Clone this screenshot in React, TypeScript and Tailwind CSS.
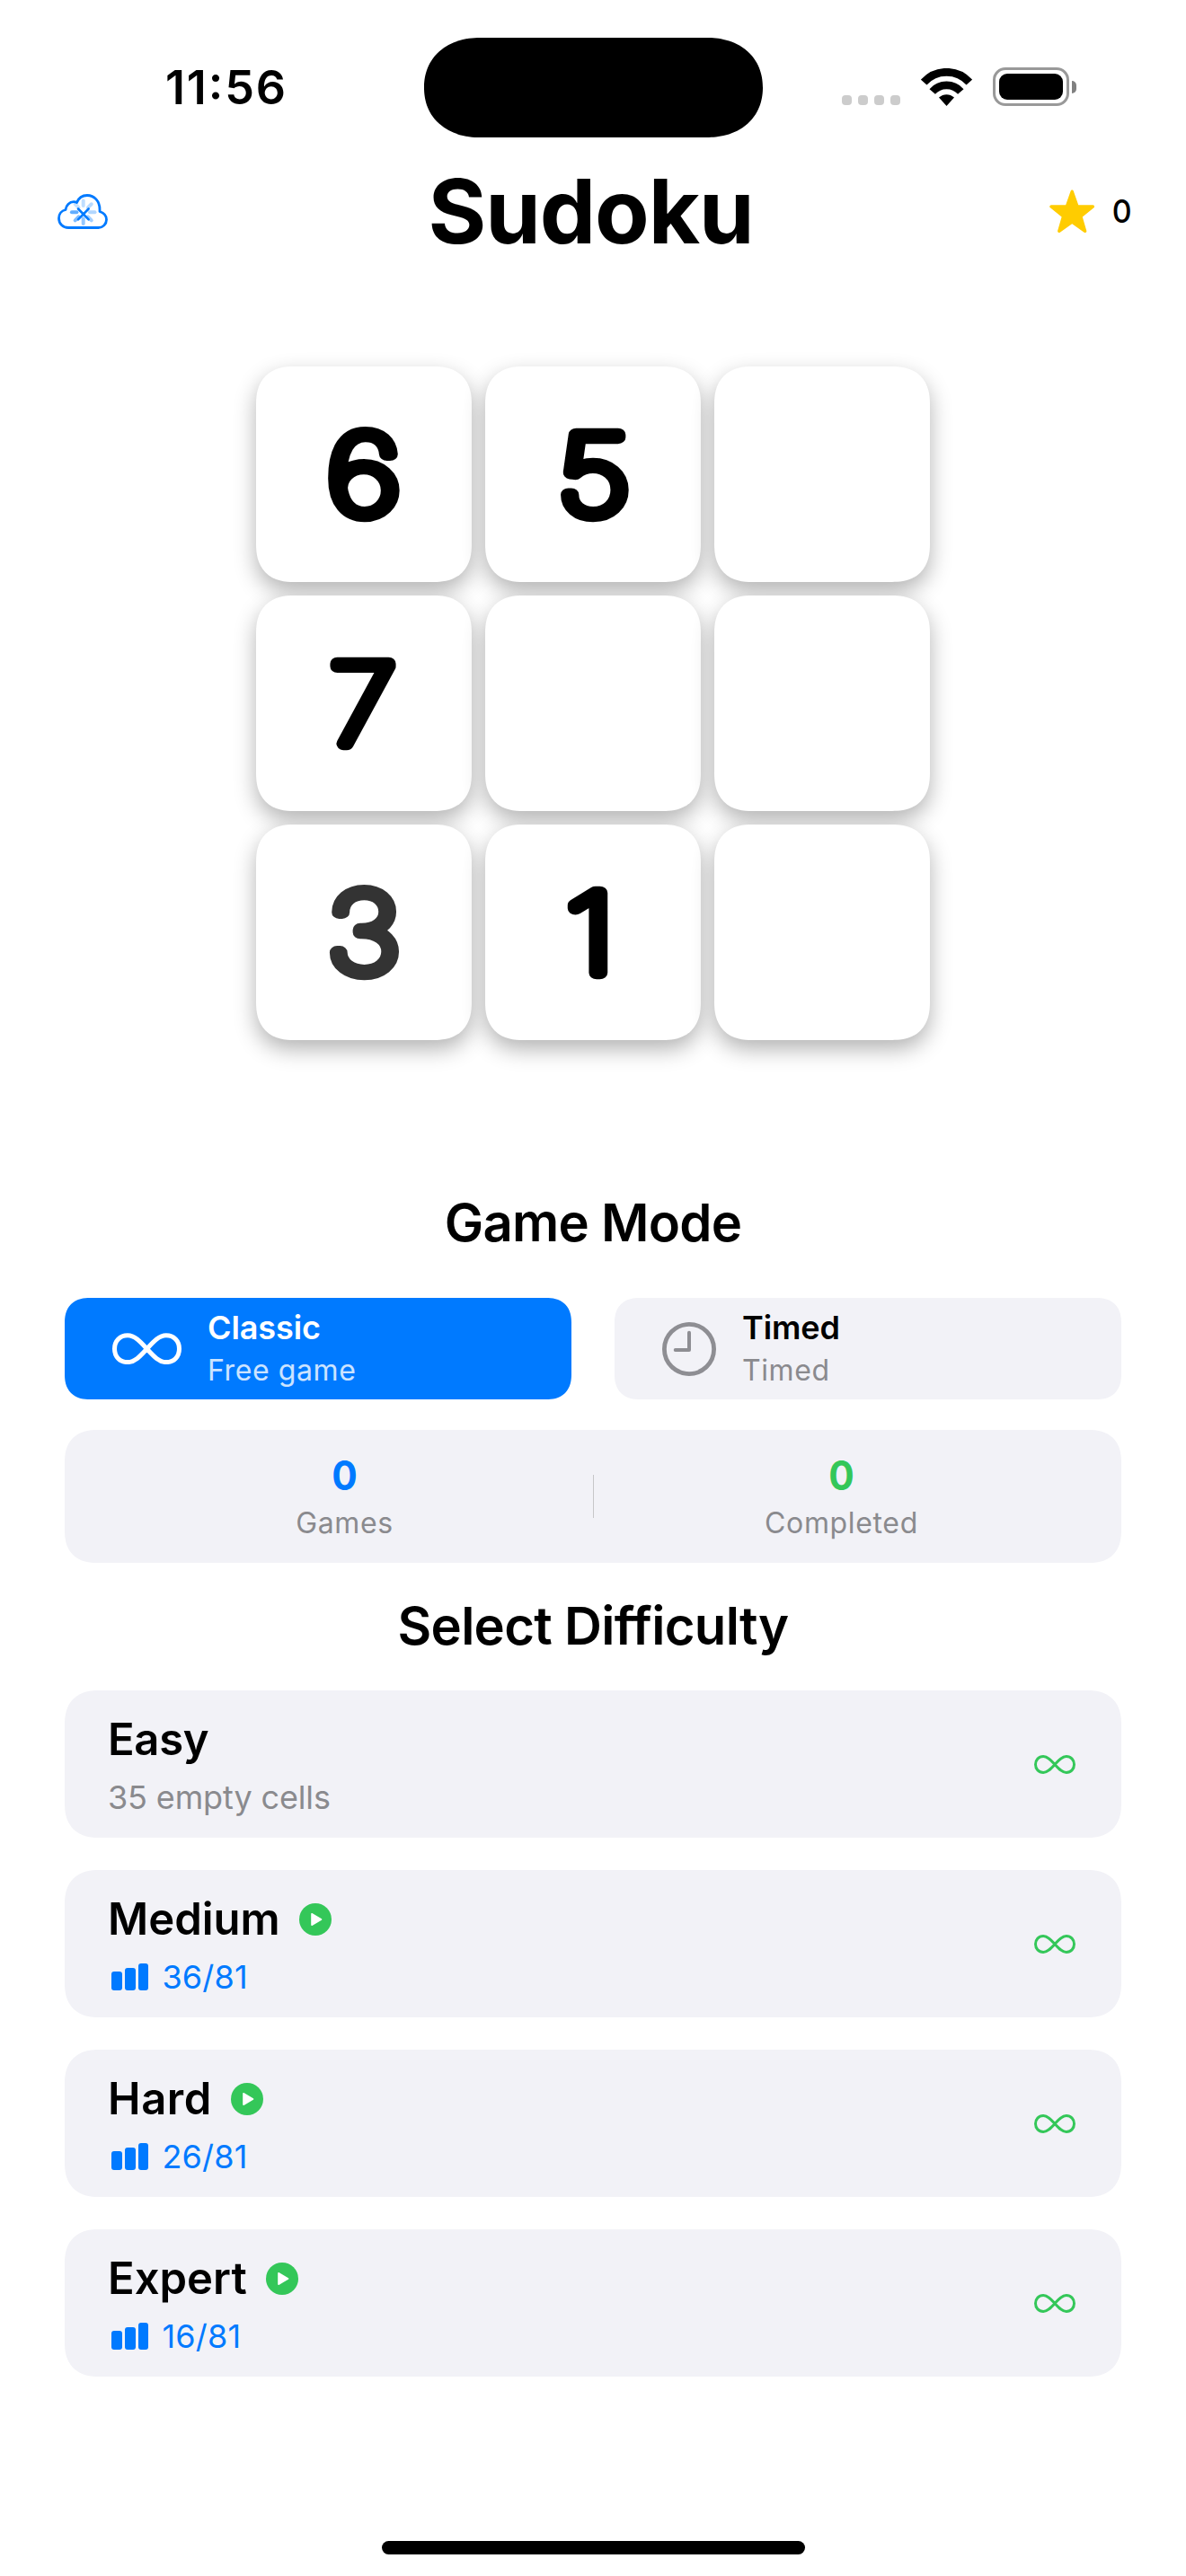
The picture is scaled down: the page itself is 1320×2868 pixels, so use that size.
import type { ReactNode } from "react";

function Infinity({ className }: { className: string }) {
  return (
    <svg viewBox="0 0 46 21" className={className} fill="none" stroke="currentColor" strokeWidth="3">
      <path d="M23 10.5C18.6 5.7 15 1.6 10.2 1.6C5 1.6 1.5 5.3 1.5 10.5S5 19.4 10.2 19.4C15 19.4 18.6 15.3 23 10.5C27.4 5.7 31 1.6 35.8 1.6C41 1.6 44.5 5.3 44.5 10.5S41 19.4 35.8 19.4C31 19.4 27.4 15.3 23 10.5Z" />
    </svg>
  );
}

function Clock() {
  return (
    <svg viewBox="0 0 60 60" className="size-[60px] text-[#8e8e93]" fill="none" stroke="currentColor">
      <circle cx="30" cy="30" r="27.6" strokeWidth="4.8" />
      <path d="M30 11.7V31H14.7" strokeWidth="4" strokeLinecap="round" strokeLinejoin="round" />
    </svg>
  );
}

function Wifi() {
  return (
    <svg viewBox="0 0 57 42" className="h-[42px] w-[57px]" fill="none">
      <path d="M3.2 15.6A34 34 0 0 1 53.8 15.6" stroke="#000" strokeWidth="8.8" />
      <path d="M12.7 26A21.1 21.1 0 0 1 44.3 26" stroke="#000" strokeWidth="8.6" />
      <path d="M20 32.6C25 28 32 28 37 32.6L28.5 42Z" fill="#000" />
    </svg>
  );
}

const spokes = [0.25, 0.28, 0.3, 0.36, 0.42, 0.5, 0.62, 0.22];

function CloudSync() {
  return (
    <svg viewBox="0 0 56 39" className="h-[39px] w-14" fill="none" stroke="#007aff" strokeLinejoin="round">
      <path
        d="M12 37.5C6 37.5 1.5 33 1.5 27C1.5 22.5 4.5 18.5 9 17.5C9.5 12.5 13.5 8.7 18 8.7C19.5 8.7 20.5 9 21.5 9.5C23.5 4.5 28 1.5 33 1.5C41 1.5 47 8 47 17V19.5C51.5 21 54.5 24 54.5 28.5C54.5 33.5 50.5 37.5 45.5 37.5Z"
        strokeWidth="2.8"
      />
      {spokes.map((opacity, i) => (
        <path
          key={i}
          d="M28.7 13V7.5"
          strokeWidth="4"
          strokeLinecap="round"
          opacity={opacity}
          transform={`rotate(${i * 45} 28.7 20.3)`}
        />
      ))}
      <path d="M23 16.5L34.6 28.3M34.6 16.5L23 28.3" strokeWidth="2.6" strokeLinecap="round" />
    </svg>
  );
}

function Star() {
  return (
    <svg viewBox="0 0 50.5 48.5" className="h-[48.5px] w-[50.5px]">
      <path
        d="M25.2 2.2L31 18.8L48.4 19L34.8 29.8L39.6 46.3L25.2 36.2L10.8 46.3L15.6 29.8L2 19L19.4 18.8Z"
        fill="#ffcc00"
        stroke="#ffcc00"
        strokeWidth="3.4"
        strokeLinejoin="round"
      />
    </svg>
  );
}

function Play() {
  return (
    <svg viewBox="0 0 36 36" className="size-9">
      <circle cx="18" cy="18" r="18" fill="#34c759" />
      <path d="M14 11.8L24.5 18L14 24.2Z" fill="#fff" stroke="#fff" strokeWidth="1.6" strokeLinejoin="round" />
    </svg>
  );
}

function Bars() {
  return (
    <div className="ml-1 flex items-end gap-[3px]">
      <div className="h-[21px] w-[11.8px] rounded-[3px] bg-[#007aff]" />
      <div className="h-[25.5px] w-[11.8px] rounded-[3px] bg-[#007aff]" />
      <div className="h-[30.5px] w-[11.8px] rounded-[3px] bg-[#007aff]" />
    </div>
  );
}

function StatusBar() {
  return (
    <div className="relative flex h-[180px] items-start justify-between pt-[75px] pr-[122px] pl-[184px]">
      <span className="text-[52px] leading-[46px] font-semibold tracking-[1.86px] [font-feature-settings:'case']">11:56</span>
      <div className="flex h-[43px] items-center">
        <div className="flex gap-[7px] self-end pb-px">
          {[0, 1, 2, 3].map((i) => (
            <div key={i} className="size-[11px] rounded-[4px] bg-[#cccccc]" />
          ))}
        </div>
        <div className="ml-[23px]">
          <Wifi />
        </div>
        <div className="ml-[23px] h-[43px] w-[85px] rounded-[14px] border-[3px] border-[#999999] p-1">
          <div className="h-[29px] w-[71px] rounded-[9px] bg-black" />
        </div>
        <div className="ml-[3px] h-[14px] w-[5px] rounded-r-full bg-[#808080]" />
      </div>
      <div className="absolute top-[41.5px] left-[471.5px] h-[111px] w-[377px] rounded-[62px/55.5px] bg-black [corner-shape:superellipse(1.12)]" />
    </div>
  );
}

type TileData = { digit: string; stretch?: number; center?: number; faded?: boolean };

const tiles: TileData[] = [
  { digit: "6", stretch: 1.2 },
  { digit: "5", stretch: 1.17, center: 121 },
  { digit: "" },
  { digit: "7", stretch: 1.1, center: 119 },
  { digit: "" },
  { digit: "" },
  { digit: "3", stretch: 1.14, faded: true },
  { digit: "1", stretch: 1.2, center: 117 },
  { digit: "" },
];

/* Thin numerals with a heavy round-joined outline give the soft rounded digits. */
function Tile({ digit, stretch = 1, center = 120, faded }: TileData) {
  const color = faded ? "#333333" : "#000000";
  return (
    <div className="size-[240px] rounded-[42px] bg-white shadow-[0_10px_25px_rgba(0,0,0,0.3)] [corner-shape:superellipse(1.25)]">
      {digit && (
        <svg viewBox="0 0 240 240" className="size-[240px]">
          <text
            transform={`translate(${center} 164.7) scale(${stretch} 1)`}
            textAnchor="middle"
            fontFamily="Inter, sans-serif"
            fontWeight="100"
            fontSize="123"
            fill={color}
            stroke={color}
            strokeWidth="14.6"
            strokeLinejoin="round"
          >
            {digit}
          </text>
        </svg>
      )}
    </div>
  );
}

function ModeButton({ icon, title, sub, active }: { icon: ReactNode; title: string; sub: string; active?: boolean }) {
  return (
    <div
      className={
        active
          ? "flex h-[113px] w-[564px] items-center rounded-[28px] bg-[#007aff] pl-[53px] text-white [corner-shape:superellipse(1.25)]"
          : "flex h-[113px] w-[564px] items-center rounded-[28px] bg-[#f2f2f7] pl-[53px] text-black [corner-shape:superellipse(1.25)]"
      }
    >
      {icon}
      <div className="ml-[29px]">
        <p className="text-[36px] leading-[48px] font-semibold tracking-[-0.1px]">{title}</p>
        <p className={active ? "text-[32px] leading-[47px] tracking-[0.6px] text-white/80" : "text-[32px] leading-[47px] tracking-[0.6px] text-[#8a8a8e]"}>
          {sub}
        </p>
      </div>
    </div>
  );
}

function Stat({ value, label, green }: { value: string; label: string; green?: boolean }) {
  return (
    <div className="w-[527px] text-center">
      <p className={green ? "scale-x-94 text-[45px] leading-[52px] font-bold text-[#34c759]" : "scale-x-94 text-[45px] leading-[52px] font-bold text-[#007aff]"}>
        {value}
      </p>
      <p className="text-[32px] leading-[53px] tracking-[0.65px] text-[#8a8a8e]">{label}</p>
    </div>
  );
}

const levels = [
  { name: "Easy", nameClass: "tracking-[-0.3px]" },
  { name: "Medium", nameClass: "tracking-normal", filled: "36/81" },
  { name: "Hard", nameClass: "tracking-[0.6px]", filled: "26/81" },
  { name: "Expert", nameClass: "tracking-normal", filled: "16/81" },
];

function Level({ name, nameClass, filled }: { name: string; nameClass: string; filled?: string }) {
  return (
    <div className="flex h-[164px] items-center justify-between rounded-[38px] bg-[#f2f2f7] pr-[51px] pl-12 [corner-shape:superellipse(1.25)]">
      <div className="pt-[10px]">
        <div className="flex h-16 items-center gap-[21px]">
          <span className={`text-[49px] leading-[64px] font-semibold ${nameClass}`}>{name}</span>
          {filled && <Play />}
        </div>
        {filled ? (
          <div className="flex h-16 items-center gap-[15px]">
            <Bars />
            <span className="text-[36px] leading-[64px] tracking-[0.2px] text-[#007aff]">{filled}</span>
          </div>
        ) : (
          <p className="text-[36px] leading-[64px] tracking-[-0.13px] text-[#8a8a8e]">35 empty cells</p>
        )}
      </div>
      <Infinity className="h-[21px] w-[46px] text-[#34c759]" />
    </div>
  );
}

export default function App() {
  return (
    <div className="flex h-[2868px] w-[1320px] flex-col bg-white font-['Inter',sans-serif] text-black">
      <StatusBar />
      <header className="grid h-[110px] grid-cols-[1fr_auto_1fr] items-center pr-[60px] pl-[59px]">
        <div className="pl-[5px]">
          <CloudSync />
        </div>
        <h1 className="pr-1 text-[99px] leading-[110px] font-bold tracking-[-1.1px]">Sudoku</h1>
        <div className="flex items-center justify-end gap-[18px]">
          <Star />
          <span className="scale-x-94 text-[36px] font-medium">0</span>
        </div>
      </header>
      <div className="mx-auto mt-[118px] grid grid-cols-3 gap-[15px]">
        {tiles.map((tile, i) => (
          <Tile key={i} {...tile} />
        ))}
      </div>
      <h2 className="mt-[167px] text-center text-[58px] leading-[72px] font-semibold tracking-[-0.74px]">Game Mode</h2>
      <div className="mx-[72px] mt-12 flex justify-between">
        <ModeButton active icon={<Infinity className="h-[35.4px] w-[77px]" />} title="Classic" sub="Free game" />
        <ModeButton icon={<Clock />} title="Timed" sub="Timed" />
      </div>
      <div className="mx-[72px] mt-[34px] flex h-[148px] items-center justify-between rounded-[36px] bg-[#f2f2f7] px-12 [corner-shape:superellipse(1.25)]">
        <div className="pt-[7px]">
          <Stat value="0" label="Games" />
        </div>
        <div className="h-12 w-px bg-[#c6c6c8]" />
        <div className="pt-[7px]">
          <Stat value="0" label="Completed" green />
        </div>
      </div>
      <h2 className="mt-[34px] text-center text-[58px] leading-[72px] font-semibold tracking-[-0.7px]">Select Difficulty</h2>
      <div className="mx-[72px] mt-9 flex flex-col gap-9">
        {levels.map((level) => (
          <Level key={level.name} {...level} />
        ))}
      </div>
      <div className="mx-auto mt-[183px] h-[15px] w-[471px] rounded-full bg-black" />
    </div>
  );
}
